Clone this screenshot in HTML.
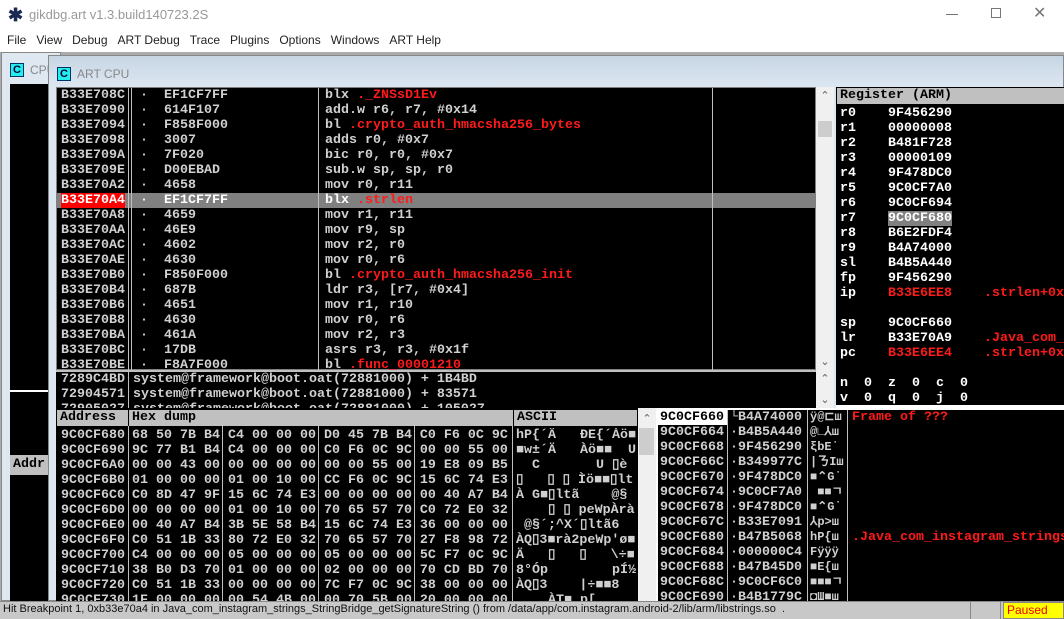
<!DOCTYPE html>
<html><head><meta charset="utf-8"><style>
*{margin:0;padding:0;box-sizing:border-box}
body{width:1064px;height:619px;overflow:hidden;background:#ababab;position:relative;font-family:"Liberation Sans",sans-serif}
.a{position:absolute}
.m{font-family:"Liberation Mono",monospace;font-size:13.33px;line-height:15px;white-space:pre;color:#d0d0d0;font-weight:bold}
.blk{background:#000}
.r{color:#ff1a1a}
.w{color:#fff}
.vl{position:absolute;width:1px;background:#c0c0c0}
.hdr{background:#c0c0c0;color:#000;font-family:"Liberation Mono",monospace;font-size:13.33px;line-height:16px;white-space:pre;padding-left:3px;font-weight:bold}
.sb{position:absolute;background:#f0f0f0}
.arr{position:absolute;left:0;width:100%;text-align:center;font-size:11px;color:#606060;font-family:"DejaVu Sans",sans-serif}
</style></head><body>
<!-- title & menu -->
<div class="a" style="left:0;top:0;width:1064px;height:52px;background:#fff"></div>
<div class="a" style="left:8px;top:5px;font-size:18px;color:#1a2a55;font-weight:bold">✱</div>
<div class="a" style="left:29px;top:7px;font-size:13px;color:#999">gikdbg.art v1.3.build140723.2S</div>
<div class="a" style="left:946px;top:14px;width:12px;height:1px;background:#777"></div>
<div class="a" style="left:991px;top:8px;width:10px;height:10px;border:1px solid #777"></div>
<div class="a" style="left:1033px;top:3px;font-size:16px;color:#777">✕</div>
<div class="a" style="left:7px;top:33px;font-size:12px;color:#222;word-spacing:0">File&nbsp;&nbsp;&nbsp;View&nbsp;&nbsp;&nbsp;Debug&nbsp;&nbsp;&nbsp;ART Debug&nbsp;&nbsp;&nbsp;Trace&nbsp;&nbsp;&nbsp;Plugins&nbsp;&nbsp;&nbsp;Options&nbsp;&nbsp;&nbsp;Windows&nbsp;&nbsp;&nbsp;ART Help</div>
<div class="a" style="left:0;top:52px;width:1064px;height:549px;background:#ababab"></div>
<!-- back CPU window -->
<div class="a" style="left:1px;top:52px;width:60px;height:549px;background:#dfe8f1;border:1px solid #888"></div>
<div class="a" style="left:10px;top:63px;width:14px;height:14px;background:#2ee;border:1px solid #036;font-size:11px;font-weight:bold;line-height:12px;text-align:center;color:#003">C</div>
<div class="a" style="left:30px;top:63px;font-size:12px;color:#888">CPU</div>
<div class="a blk" style="left:10px;top:84px;width:40px;height:306px"></div>
<div class="a" style="left:10px;top:390px;width:40px;height:2px;background:#fff"></div>
<div class="a blk" style="left:10px;top:392px;width:40px;height:63px"></div>
<div class="a" style="left:10px;top:455px;width:40px;height:20px;background:#c0c0c0"></div>
<div class="a hdr" style="left:10px;top:457px;width:40px;background:transparent">Addr</div>
<div class="a blk" style="left:10px;top:475px;width:40px;height:126px"></div>
<!-- ART CPU window -->
<div class="a" style="left:48px;top:55px;width:1016px;height:546px;background:linear-gradient(#c7d5e3,#dbe6f1 30px,#dbe6f1);border:1px solid #888"></div>
<div class="a" style="left:57px;top:67px;width:14px;height:14px;background:#2ee;border:1px solid #036;font-size:11px;font-weight:bold;line-height:12px;text-align:center;color:#003">C</div>
<div class="a" style="left:77px;top:67px;font-size:12px;color:#888">ART CPU</div>
<!-- disasm -->
<div class="a blk" style="left:56px;top:87px;width:760px;height:283px;border:1px solid #808080"></div>
<div class="a" style="left:56px;top:193px;width:760px;height:15px;background:#808080"></div>
<div class="a" style="left:61px;top:193px;width:64px;height:15px;background:#f00"></div>
<div class="vl" style="left:128px;top:88px;height:282px"></div>
<div class="vl" style="left:131px;top:88px;height:282px"></div>
<div class="vl" style="left:318px;top:88px;height:282px"></div>
<div class="vl" style="left:712px;top:88px;height:282px"></div>
<div class="a m" style="left:61px;top:88px">B33E708C
B33E7090
B33E7094
B33E7098
B33E709A
B33E709E
B33E70A2
<span class="w">B33E70A4</span>
B33E70A8
B33E70AA
B33E70AC
B33E70AE
B33E70B0
B33E70B4
B33E70B6
B33E70B8
B33E70BA
B33E70BC
B33E70BE</div>
<div class="a m" style="left:140px;top:88px">·  EF1CF7FF
·  614F107
·  F858F000
·  3007
·  7F020
·  D00EBAD
·  4658
<span class="w">·  EF1CF7FF</span>
·  4659
·  46E9
·  4602
·  4630
·  F850F000
·  687B
·  4651
·  4630
·  461A
·  17DB
·  F8A7F000</div>
<div class="a m" style="left:325px;top:88px">blx <span class="r">._ZNSsD1Ev</span>
add.w r6, r7, #0x14
bl <span class="r">.crypto_auth_hmacsha256_bytes</span>
adds r0, #0x7
bic r0, r0, #0x7
sub.w sp, sp, r0
mov r0, r11
<span class="w">blx </span><span class="r">.strlen</span>
mov r1, r11
mov r9, sp
mov r2, r0
mov r0, r6
bl <span class="r">.crypto_auth_hmacsha256_init</span>
ldr r3, [r7, #0x4]
mov r1, r10
mov r0, r6
mov r2, r3
asrs r3, r3, #0x1f
bl <span class="r">.func_00001210</span></div>
<div class="sb" style="left:816px;top:87px;width:18px;height:283px"><div class="arr" style="top:2px">⌃</div><div class="a" style="left:2px;top:34px;width:14px;height:16px;background:#cdcdcd"></div><div class="arr" style="bottom:2px">⌄</div></div>
<!-- call stack -->
<div class="a blk" style="left:56px;top:370px;width:760px;height:38px;border-top:2px solid #c0c0c0"></div>
<div class="vl" style="left:128px;top:372px;height:36px"></div>
<div class="a m" style="left:61px;top:372px;height:36px;overflow:hidden">7289C4BD
72904571
72905027</div>
<div class="a m" style="left:133px;top:372px;height:36px;overflow:hidden">system@framework@boot.oat(72881000) + 1B4BD
system@framework@boot.oat(72881000) + 83571
system@framework@boot.oat(72881000) + 105027</div>
<div class="sb" style="left:816px;top:370px;width:18px;height:38px"><div class="arr" style="top:2px">⌃</div><div class="arr" style="bottom:2px">⌄</div></div>
<!-- registers -->
<div class="a blk" style="left:836px;top:87px;width:228px;height:320px"></div>
<div class="a hdr" style="left:837px;top:88px;width:227px">Register (ARM)</div>
<div class="a" style="left:888px;top:211px;width:64px;height:15px;background:#808080"></div>
<div class="a m w" style="left:840px;top:106px">r0    9F456290
r1    00000008
r2    B481F728
r3    00000109
r4    9F478DC0
r5    9C0CF7A0
r6    9C0CF694
r7    9C0CF680
r8    B6E2FDF4
r9    B4A74000
sl    B4B5A440
fp    9F456290
ip    <span class="r">B33E6EE8    .strlen+0x</span>

sp    9C0CF660
lr    B33E70A9    <span class="r">.Java_com_</span>
pc    <span class="r">B33E6EE4    .strlen+0x</span>

n  0  z  0  c  0
v  0  q  0  j  0</div>
<div class="a" style="left:836px;top:405px;width:228px;height:3px;background:#fff"></div>
<!-- dump -->
<div class="a blk" style="left:56px;top:408px;width:582px;height:193px"></div>
<div class="a hdr" style="left:57px;top:410px;width:71px">Address</div>
<div class="a hdr" style="left:129px;top:410px;width:383px">Hex dump</div>
<div class="a hdr" style="left:514px;top:410px;width:123px">ASCII</div>
<div class="vl" style="left:128px;top:426px;height:175px"></div>
<div class="vl" style="left:222px;top:426px;height:175px"></div>
<div class="vl" style="left:318px;top:426px;height:175px"></div>
<div class="vl" style="left:414px;top:426px;height:175px"></div>
<div class="vl" style="left:512px;top:410px;height:191px"></div>
<div class="a m" style="left:61px;top:428px;height:173px;overflow:hidden">9C0CF680
9C0CF690
9C0CF6A0
9C0CF6B0
9C0CF6C0
9C0CF6D0
9C0CF6E0
9C0CF6F0
9C0CF700
9C0CF710
9C0CF720
9C0CF730</div>
<div class="a m" style="left:132px;top:428px;height:173px;overflow:hidden">68 50 7B B4 C4 00 00 00 D0 45 7B B4 C0 F6 0C 9C
9C 77 B1 B4 C4 00 00 00 C0 F6 0C 9C 00 00 55 00
00 00 43 00 00 00 00 00 00 00 55 00 19 E8 09 B5
01 00 00 00 01 00 10 00 CC F6 0C 9C 15 6C 74 E3
C0 8D 47 9F 15 6C 74 E3 00 00 00 00 00 40 A7 B4
00 00 00 00 01 00 10 00 70 65 57 70 C0 72 E0 32
00 40 A7 B4 3B 5E 58 B4 15 6C 74 E3 36 00 00 00
C0 51 1B 33 80 72 E0 32 70 65 57 70 27 F8 98 72
C4 00 00 00 05 00 00 00 05 00 00 00 5C F7 0C 9C
38 B0 D3 70 01 00 00 00 02 00 00 00 70 CD BD 70
C0 51 1B 33 00 00 00 00 7C F7 0C 9C 38 00 00 00
1F 00 00 00 00 54 4B 00 00 70 5B 00 20 00 00 00</div>
<div class="a m" style="left:516px;top:428px;width:120px;height:173px;overflow:hidden">hP{´Ä   ÐE{´Àö■
■w±´Ä   Àö■■  U
  C       U ▯è
▯   ▯ ▯ Ìö■■▯lt
À G■▯ltã    @§
    ▯ ▯ peWpÀrà
 @§´;^X´▯ltã6
ÀQ▯3■rà2peWp'ø■
Ä   ▯   ▯   \÷■
8°Óp        pÍ½
ÀQ▯3    |÷■■8
    ÀT■ p[</div>
<div class="sb" style="left:638px;top:408px;width:18px;height:193px"><div class="arr" style="top:4px">⌃</div><div class="a" style="left:1px;top:20px;width:15px;height:27px;background:#cdcdcd"></div></div>
<!-- stack -->
<div class="a blk" style="left:656px;top:408px;width:408px;height:193px;border-top:2px solid #fff;border-left:2px solid #fff"></div>
<div class="a" style="left:658px;top:410px;width:69px;height:15px;background:#fff"></div>
<div class="vl" style="left:727px;top:410px;height:191px"></div>
<div class="vl" style="left:807px;top:410px;height:191px"></div>
<div class="vl" style="left:847px;top:410px;height:191px"></div>
<div class="a m" style="left:660px;top:410px;height:191px;overflow:hidden"><span style="color:#000">9C0CF660</span>
9C0CF664
9C0CF668
9C0CF66C
9C0CF670
9C0CF674
9C0CF678
9C0CF67C
9C0CF680
9C0CF684
9C0CF688
9C0CF68C
9C0CF690</div>
<div class="a m" style="left:730px;top:410px;height:191px;overflow:hidden">└B4A74000
·B4B5A440
·9F456290
·B349977C
·9F478DC0
·9C0CF7A0
·9F478DC0
·B33E7091
·B47B5068
·000000C4
·B47B45D0
·9C0CF6C0
·B4B1779C</div>
<div class="a m" style="left:810px;top:410px;width:37px;height:191px;overflow:hidden;font-size:12px">ÿ@⊏ш
@∟⅄ш
ξbE˙
|ㄋIш
■⌃G˙
 ■■ㄱ
■⌃G˙
⅄p&gt;ш
hP{ш
Fÿÿÿ
■E{ш
■■■ㄱ
◘Ш■ш</div>
<div class="a m r" style="left:852px;top:410px">Frame of ???







.Java_com_instagram_strings</div>
<!-- status -->
<div class="a" style="left:0;top:601px;width:1064px;height:18px;background:#c8c8c8;border-top:1px solid #888"></div>
<div class="a" style="left:3px;top:603px;font-size:11px;color:#111;white-space:nowrap">Hit Breakpoint 1, 0xb33e70a4 in Java_com_instagram_strings_StringBridge_getSignatureString () from /data/app/com.instagram.android-2/lib/arm/libstrings.so&nbsp;&nbsp;.</div>
<div class="a" style="left:970px;top:602px;width:1px;height:17px;background:#888"></div>
<div class="a" style="left:1000px;top:602px;width:1px;height:17px;background:#888"></div>
<div class="a" style="left:1003px;top:602px;width:61px;height:17px;background:#ff0;border:1px solid #888;color:#e00;font-size:12px;padding-left:3px;line-height:15px">Paused</div>
</body></html>
